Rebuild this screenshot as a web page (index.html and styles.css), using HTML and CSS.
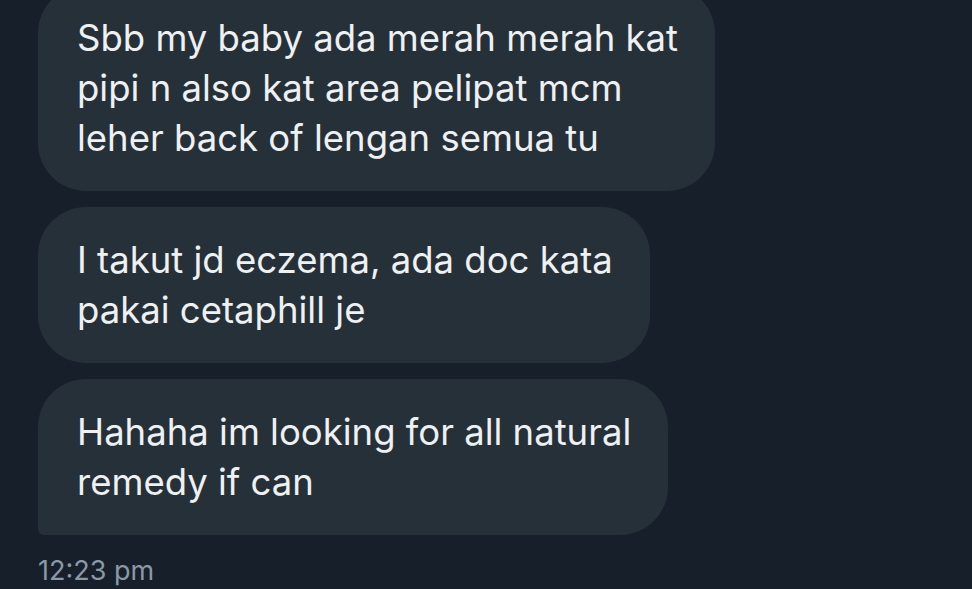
FILE: index.html
```html
<!DOCTYPE html>
<html>
<head>
<meta charset="utf-8">
<link rel="stylesheet" href="styles.css">
</head>
<body>
<div class="thread">
  <div class="bubble first">Sbb my baby ada merah merah kat<br>pipi n also kat area pelipat mcm<br>leher back of lengan semua tu</div>
  <div class="bubble">I takut jd eczema, ada doc kata<br>pakai cetaphill je</div>
  <div class="bubble last">Hahaha im looking for all natural<br>remedy if can</div>
  <div class="time">12:23 pm</div>
</div>
</body>
</html>
```
FILE: styles.css
```css
html, body {
  margin: 0;
  padding: 0;
  background: #17202a;
  height: 100%;
  overflow: hidden;
}
.thread {
  display: flex;
  flex-direction: column;
  align-items: flex-start;
  gap: 16px;
  padding-left: 38px;
  margin-top: -15px;
}
.bubble {
  background: #263039;
  color: #eef0f1;
  font-family: "Inter", sans-serif;
  font-size: 36.5px;
  line-height: 50px;
  padding: 28px 37px 28px 39px;
  border-radius: 48px;
  white-space: nowrap;
}
.bubble.last {
  border-bottom-left-radius: 6px;
}
.time {
  margin-top: 4px;
  color: #8b98a5;
  font-family: "Inter", sans-serif;
  font-size: 27px;
  line-height: 32px;
}
```
